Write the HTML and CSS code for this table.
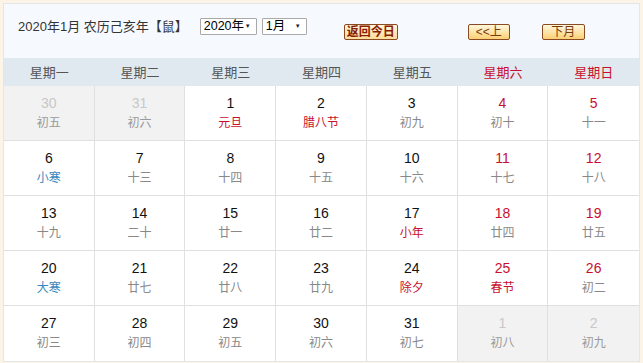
FILE: index.html
```html
<!DOCTYPE html>
<html lang="zh">
<head>
<meta charset="utf-8">
<link rel="stylesheet" href="styles.css">
</head>
<body>
<div class="cal">
  <div class="head">
    <div class="title">2020年1月 农历己亥年【鼠】</div>
    <div class="sel sel-year">2020年<span class="arrow">▼</span></div>
    <div class="sel sel-month">1月<span class="arrow">▼</span></div>
    <div class="btn btn-today">返回今日</div>
    <div class="btn btn-prev">&lt;&lt;上</div>
    <div class="btn btn-next">下月</div>
  </div>
  <div class="weekdays">
    <div>星期一</div><div>星期二</div><div>星期三</div><div>星期四</div><div>星期五</div><div class="we">星期六</div><div class="we">星期日</div>
  </div>
  <div class="grid">
    <div class="cell other"><div class="n">30</div><div class="l">初五</div></div>
    <div class="cell other"><div class="n">31</div><div class="l">初六</div></div>
    <div class="cell"><div class="n">1</div><div class="l fest">元旦</div></div>
    <div class="cell"><div class="n">2</div><div class="l fest">腊八节</div></div>
    <div class="cell"><div class="n">3</div><div class="l">初九</div></div>
    <div class="cell we"><div class="n">4</div><div class="l">初十</div></div>
    <div class="cell we"><div class="n">5</div><div class="l">十一</div></div>

    <div class="cell"><div class="n">6</div><div class="l term">小寒</div></div>
    <div class="cell"><div class="n">7</div><div class="l">十三</div></div>
    <div class="cell"><div class="n">8</div><div class="l">十四</div></div>
    <div class="cell"><div class="n">9</div><div class="l">十五</div></div>
    <div class="cell"><div class="n">10</div><div class="l">十六</div></div>
    <div class="cell we"><div class="n">11</div><div class="l">十七</div></div>
    <div class="cell we"><div class="n">12</div><div class="l">十八</div></div>

    <div class="cell"><div class="n">13</div><div class="l">十九</div></div>
    <div class="cell"><div class="n">14</div><div class="l">二十</div></div>
    <div class="cell"><div class="n">15</div><div class="l">廿一</div></div>
    <div class="cell"><div class="n">16</div><div class="l">廿二</div></div>
    <div class="cell"><div class="n">17</div><div class="l fest">小年</div></div>
    <div class="cell we"><div class="n">18</div><div class="l">廿四</div></div>
    <div class="cell we"><div class="n">19</div><div class="l">廿五</div></div>

    <div class="cell"><div class="n">20</div><div class="l term">大寒</div></div>
    <div class="cell"><div class="n">21</div><div class="l">廿七</div></div>
    <div class="cell"><div class="n">22</div><div class="l">廿八</div></div>
    <div class="cell"><div class="n">23</div><div class="l">廿九</div></div>
    <div class="cell"><div class="n">24</div><div class="l fest">除夕</div></div>
    <div class="cell we"><div class="n">25</div><div class="l fest">春节</div></div>
    <div class="cell we"><div class="n">26</div><div class="l">初二</div></div>

    <div class="cell last"><div class="n">27</div><div class="l">初三</div></div>
    <div class="cell last"><div class="n">28</div><div class="l">初四</div></div>
    <div class="cell last"><div class="n">29</div><div class="l">初五</div></div>
    <div class="cell last"><div class="n">30</div><div class="l">初六</div></div>
    <div class="cell last"><div class="n">31</div><div class="l">初七</div></div>
    <div class="cell last other"><div class="n">1</div><div class="l">初八</div></div>
    <div class="cell last other"><div class="n">2</div><div class="l">初九</div></div>
  </div>
</div>
</body>
</html>
```
FILE: styles.css
```css
* { box-sizing: border-box; }
html, body { margin: 0; padding: 0; }
body {
  background: #fcf4e6;
  font-family: "Liberation Sans", "Noto Sans CJK SC", sans-serif;
  width: 643px;
  height: 363px;
  overflow: hidden;
}
.cal {
  margin: 3px;
  width: 637px;
  border: 1px solid #e6e6e6;
  background: #fff;
}
.head {
  height: 54px;
  background: #f6faff;
  display: flex;
  align-items: flex-start;
  padding: 14px 0 0 14px;
}
.title {
  font-size: 13px;
  line-height: 17px;
  color: #333;
  margin-right: 12px;
}
.sel {
  height: 17px;
  border: 1px solid #a9a9a9;
  background: #fff;
  font-size: 12.5px;
  line-height: 15px;
  color: #000;
  padding-left: 3px;
  position: relative;
  border-radius: 1px;
}
.sel .arrow {
  position: absolute;
  right: 5px;
  top: 0;
  font-size: 6px;
  line-height: 14px;
  color: #222;
}
.sel-year { width: 57px; margin-right: 5px; }
.sel-month { width: 45px; }
.btn {
  margin-top: 6px;
  height: 16px;
  border: 1px solid #8a4a22;
  border-radius: 2px;
  background: linear-gradient(#fff7dc, #fde3a4 55%, #f9cf72);
  font-size: 12px;
  line-height: 14px;
  text-align: center;
  color: #7a3a10;
}
.btn-today {
  margin-left: 37px;
  width: 54px;
  font-weight: bold;
  color: #8a1c00;
  background: linear-gradient(#fff6dd, #fcdc9a);
}
.btn-prev { margin-left: 70px; width: 42px; }
.btn-next { margin-left: 32px; width: 43px; }
.weekdays {
  display: grid;
  grid-template-columns: repeat(7, 1fr);
  height: 28px;
  background: #e0e9f0;
  font-size: 13px;
  line-height: 28px;
  text-align: center;
  color: #555;
  font-family: "Noto Sans CJK SC", sans-serif;
}
.weekdays .we { color: #c8102e; }
.grid {
  display: grid;
  grid-template-columns: repeat(7, 1fr);
  grid-auto-rows: 55px;
}
.cell {
  border-right: 1px solid #e0e0e0;
  border-bottom: 1px solid #e0e0e0;
  text-align: center;
  padding-top: 8px;
}
.cell:nth-child(7n) { border-right: none; }
.cell.last { border-bottom: none; }
.n {
  font-size: 14px;
  line-height: 18px;
  color: #111;
}
.l {
  font-size: 12px;
  line-height: 19px;
  color: #888;
  font-family: "Noto Sans CJK SC", sans-serif;
}
.cell.we .n { color: #c8102e; }
.l.fest { color: #c8102e; }
.l.term { color: #3a88bd; }
.cell.other { background: #f2f2f2; }
.cell.other .n { color: #c8c8c8; }
.cell.other .l { color: #999; }
```
